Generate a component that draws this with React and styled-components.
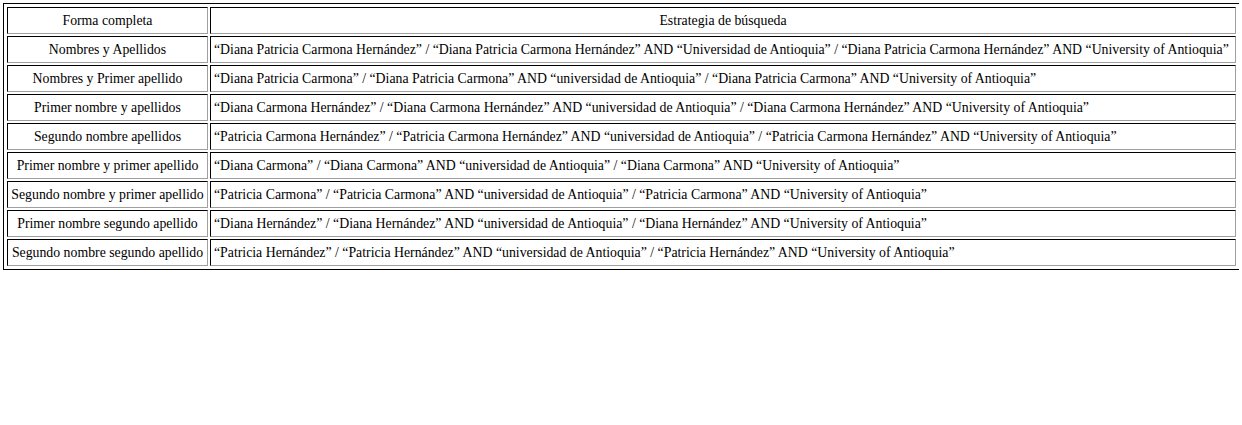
import React from "react";
import styled, { createGlobalStyle } from "styled-components";

const GlobalStyle = createGlobalStyle`
  body {
    margin: 3px;
    background: #fff;
    font-family: "Liberation Serif", "Times New Roman", serif;
    color: #000;
  }
`;

const Table = styled.table`
  width: 1237px;
  border: 1px solid #000;
  padding: 1px;
  border-collapse: separate;
  border-spacing: 2px;
  font-size: 13.8px;
`;

const Cell = styled.td`
  border-style: solid;
  border-width: 1px;
  border-color: #000 #a0a0a0 #a0a0a0 #000;
  padding: 4px 3px;
  line-height: 17px;
  white-space: nowrap;
  text-align: ${(p) => (p.$center ? "center" : "left")};
`;

const rows = [
  [
    "Nombres y Apellidos",
    "“Diana Patricia Carmona Hernández” / “Diana Patricia Carmona Hernández” AND “Universidad de Antioquia” / “Diana Patricia Carmona Hernández” AND “University of Antioquia”",
  ],
  [
    "Nombres y Primer apellido",
    "“Diana Patricia Carmona” / “Diana Patricia Carmona” AND “universidad de Antioquia” / “Diana Patricia Carmona” AND “University of Antioquia”",
  ],
  [
    "Primer nombre y apellidos",
    "“Diana Carmona Hernández” / “Diana Carmona Hernández” AND “universidad de Antioquia” / “Diana Carmona Hernández” AND “University of Antioquia”",
  ],
  [
    "Segundo nombre apellidos",
    "“Patricia Carmona Hernández” / “Patricia Carmona Hernández” AND “universidad de Antioquia” / “Patricia Carmona Hernández” AND “University of Antioquia”",
  ],
  [
    "Primer nombre y primer apellido",
    "“Diana Carmona” / “Diana Carmona” AND “universidad de Antioquia” / “Diana Carmona” AND “University of Antioquia”",
  ],
  [
    "Segundo nombre y primer apellido",
    "“Patricia Carmona” / “Patricia Carmona” AND “universidad de Antioquia” / “Patricia Carmona” AND “University of Antioquia”",
  ],
  [
    "Primer nombre segundo apellido",
    "“Diana Hernández” / “Diana Hernández” AND “universidad de Antioquia” / “Diana Hernández” AND “University of Antioquia”",
  ],
  [
    "Segundo nombre segundo apellido",
    "“Patricia Hernández” / “Patricia Hernández” AND “universidad de Antioquia” / “Patricia Hernández” AND “University of Antioquia”",
  ],
];

export default function App() {
  return (
    <>
      <GlobalStyle />
      <Table>
        <tbody>
          <tr>
            <Cell $center>Forma completa</Cell>
            <Cell $center>Estrategia de búsqueda</Cell>
          </tr>
          {rows.map((row, idx) => (
            <tr key={idx}>
              <Cell $center>{row[0]}</Cell>
              <Cell>{row[1]}</Cell>
            </tr>
          ))}
        </tbody>
      </Table>
    </>
  );
}
